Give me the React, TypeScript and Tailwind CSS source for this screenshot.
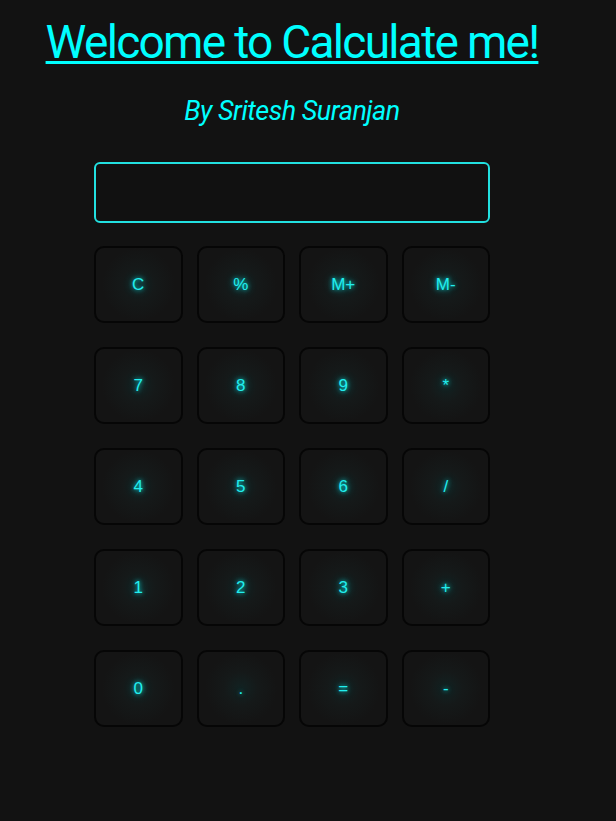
import React from 'react';

const keys = [
  ['C', '%', 'M+', 'M-'],
  ['7', '8', '9', '*'],
  ['4', '5', '6', '/'],
  ['1', '2', '3', '+'],
  ['0', '.', '=', '-'],
];

const App: React.FC = () => {
  return (
    <div className="min-h-[821px] w-full bg-[#121212]">
      <div className="w-[584px] flex flex-col items-center">
        {/* Heading */}
        <h1 className="mt-[14px] text-[46px] leading-[56px] text-[#00ffff] underline decoration-[3px] underline-offset-[3px] font-['Roboto',sans-serif] tracking-[-1.7px]">
          Welcome to Calculate me!
        </h1>
        <h2 className="mt-[26px] text-[27px] leading-[30px] italic text-[#00ffff] font-['Roboto',sans-serif] tracking-[-0.5px]">
          By Sritesh Suranjan
        </h2>

        {/* Calculator */}
        <div className="mt-[36px] w-[396px]">
          <div className="h-[61px] w-full rounded-[6px] border-2 border-[#22e0e0] bg-[#111111]" />
          <div className="mt-[23px] grid grid-cols-4 gap-x-[14px] gap-y-[24px]">
            {keys.flat().map((k) => (
              <button
                key={k}
                className="h-[77px] rounded-[10px] border-2 border-[#060606] bg-[radial-gradient(circle_at_center,#122222_0%,#151919_30%,#141414_65%)] text-[17px] text-[#22eeee] font-['Liberation_Sans',Arial,sans-serif] [text-shadow:0_0_4px_rgba(0,255,255,0.8),0_0_10px_rgba(0,255,255,0.4)]"
              >
                {k}
              </button>
            ))}
          </div>
        </div>
      </div>
    </div>
  );
};

export default App;
